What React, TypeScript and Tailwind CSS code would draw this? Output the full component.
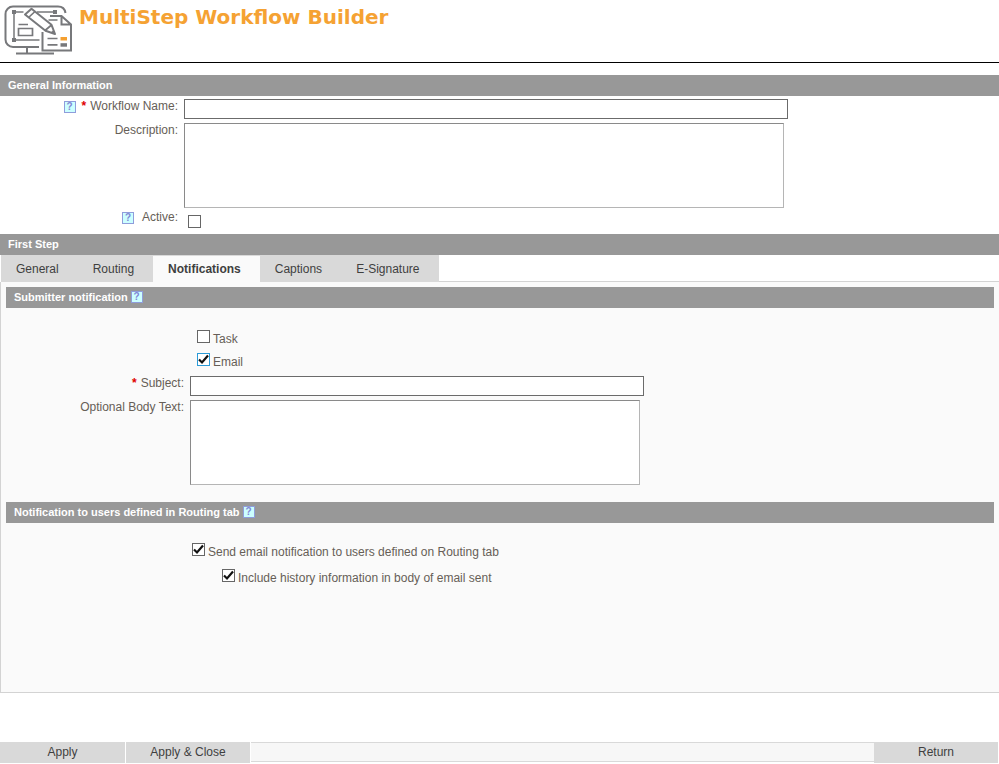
import { useState } from 'react';
import type { ReactNode } from 'react';
import clsx from 'clsx';

const TABS = ['General', 'Routing', 'Notifications', 'Captions', 'E-Signature'];

function Logo() {
  return (
    <svg width="72" height="52" viewBox="0 0 72 52" fill="none" stroke="#77787b" strokeWidth="2" aria-hidden="true">
      {/* Monitor */}
      <path d="M35 43H9a7.500 7.500 0 0 1-7.500-7.500V10a7.500 7.500 0 0 1 7.500-7.500H54q6.500 0 7.500 6.500" />
      <path d="M23 43v6M12 49.500h38" />
      {/* Drawing frame */}
      <path d="M10 9v26M12 8h7.500M33 8h17M12 36h23.500" strokeWidth="1.500" />
      <path d="M8 6h4v4h-4zM49 6h4v4h-4zM8 34h4v4h-4z" fill="#77787b" stroke="none" />
      <path d="M14.500 24.500h14v7h-14zM14.500 20.500h9.500" strokeWidth="1.700" />
      {/* Document */}
      <path d="M38.500 28V46.500h28.500V20.500L57.500 12H46M57.500 12v8.500h9.500" />
      <path d="M44.500 16h9M43.500 34.500h10M43.500 40.800h10" strokeWidth="1.700" />
      <path d="M56.500 33h6.500v3.500h-6.500z" fill="#f5a030" stroke="none" />
      <path d="M56.500 39.200h6.500v3.500h-6.500z" fill="#77787b" stroke="none" />
      {/* Pencil */}
      <path d="M21 10.500L27.500 4.800L47.500 20.800L51 30L41.500 26.800z" fill="#fff" strokeLinejoin="round" />
      <path d="M24.500 13.500l6.500-6M41 26.500l6.500-5.500" strokeWidth="1.700" />
      <path d="M47 28.300l2.500-2.300 1.500 4z" fill="#77787b" stroke="none" />
    </svg>
  );
}

function HelpButton({ topic }: { topic: string }) {
  return (
    <button
      type="button"
      aria-label={`Help: ${topic}`}
      className="flex h-3 w-3 shrink-0 items-center justify-center border border-[#8f9ddb] bg-[#ccffff] text-[10px] leading-[10px] font-bold text-[#8186d5]"
    >
      ?
    </button>
  );
}

function SectionBar({ title, help }: { title: string; help?: boolean }) {
  return (
    <div className="flex h-[21px] items-start gap-[3px] bg-[#989898] px-2">
      <h2 className="pt-0.5 text-[11px] leading-4 font-bold text-white">{title}</h2>
      {help && (
        <span className="pt-1">
          <HelpButton topic={title} />
        </span>
      )}
    </div>
  );
}

interface FieldProps {
  id: string;
  label: string;
  required?: boolean;
  help?: boolean;
  className?: string;
  children: ReactNode;
}

function Field({ id, label, required, help, className, children }: FieldProps) {
  return (
    <div className={clsx('flex items-start', className)}>
      <div className="mr-1.5 flex w-[178px] shrink-0 items-center justify-end leading-[15px]">
        {help && <HelpButton topic={label} />}
        <label htmlFor={id} className={clsx(help && (required ? 'ml-1.5' : 'ml-2'))}>
          {required && <span className="mr-1 font-bold text-[#e00000]">*</span>}
          {label}:
        </label>
      </div>
      {children}
    </div>
  );
}

interface CheckboxProps {
  id: string;
  defaultChecked?: boolean;
  active?: boolean;
}

function Checkbox({ id, defaultChecked, active }: CheckboxProps) {
  return (
    <span className="grid h-[13px] w-[13px] shrink-0">
      <input
        id={id}
        type="checkbox"
        defaultChecked={defaultChecked}
        className={clsx(
          'peer h-[13px] w-[13px] appearance-none border bg-white [grid-area:1/1]',
          active ? 'border-[#2a9bd8]' : 'border-[#666666]',
        )}
      />
      <svg
        viewBox="0 0 13 13"
        className="pointer-events-none z-10 hidden h-[13px] w-[13px] [grid-area:1/1] peer-checked:block"
        fill="none"
        stroke="#111"
        strokeWidth="2.200"
      >
        <path d="M2 6.500L5 9.500L11 2.500" />
      </svg>
    </span>
  );
}

function CheckRow({ id, label, className, ...rest }: CheckboxProps & { label: string; className?: string }) {
  return (
    <div className={clsx('flex items-start gap-[3px]', className)}>
      <Checkbox id={id} {...rest} />
      <label htmlFor={id} className="mt-px leading-4">
        {label}
      </label>
    </div>
  );
}

const inputClass = 'h-5 min-w-0 border border-[#6b6b6b] bg-white px-1 outline-none';
const areaClass =
  'block h-[85px] min-w-0 resize-none border border-t-[#8a8a8a] border-l-[#8a8a8a] border-r-[#b5b5b5] border-b-[#b5b5b5] bg-white p-1 outline-none';
const footerButtonClass = 'bg-[#d9d9d9] pb-0.5';

export default function App() {
  const [tab, setTab] = useState('Notifications');

  return (
    <div className="flex min-h-screen flex-col bg-white font-['Liberation_Sans',Arial,sans-serif] text-xs text-[#665e57]">
      <header className="flex h-[63px] items-start gap-[3px] border-b border-black pt-1 pl-1">
        <Logo />
        <h1 className="font-['DejaVu_Sans',Verdana,sans-serif] text-xl leading-[26px] font-bold text-[#f5a233]">
          MultiStep Workflow Builder
        </h1>
      </header>

      <form className="flex flex-1 flex-col pt-3" onSubmit={(e) => e.preventDefault()}>
        <SectionBar title="General Information" />
        <div className="pt-[3px] pb-1.5">
          <Field id="name" label="Workflow Name" required help>
            <input id="name" type="text" className={clsx(inputClass, 'w-[604px]')} />
          </Field>
          <Field id="description" label="Description" className="mt-1">
            <textarea id="description" className={clsx(areaClass, 'w-[600px]')} />
          </Field>
          <Field id="active" label="Active" help className="mt-0.5">
            <span className="pt-[5px] pl-1">
              <Checkbox id="active" />
            </span>
          </Field>
        </div>

        <SectionBar title="First Step" />
        <div role="tablist" className="flex h-[27px] pl-px">
          {TABS.map((name) => (
            <button
              key={name}
              type="button"
              role="tab"
              aria-selected={tab === name}
              onClick={() => setTab(name)}
              className={clsx(
                'pr-[19px] pl-[15px] text-[#3f3f3f]',
                tab === name ? 'border-t border-[#d9d9d9] bg-[#fafafa] font-bold' : 'bg-[#d9d9d9]',
              )}
            >
              {name}
            </button>
          ))}
          <div className="flex-1 border-b border-[#d3d3d3]" />
        </div>

        <div role="tabpanel" className="border-b border-l border-[#d3d3d3] bg-[#fafafa] px-[5px] pt-[5px] pb-[106px]">
          <SectionBar title="Submitter notification" help />
          <CheckRow id="task" label="Task" className="mt-[22px] pl-[191px]" />
          <CheckRow id="email" label="Email" defaultChecked active className="mt-1.5 pl-[191px]" />
          <Field id="subject" label="Subject" required className="mt-1.5">
            <input id="subject" type="text" className={clsx(inputClass, 'w-[454px]')} />
          </Field>
          <Field id="body" label="Optional Body Text" className="mt-1">
            <textarea id="body" className={clsx(areaClass, 'w-[450px]')} />
          </Field>

          <div className="mt-[17px]">
            <SectionBar title="Notification to users defined in Routing tab" help />
          </div>
          <CheckRow
            id="send"
            label="Send email notification to users defined on Routing tab"
            defaultChecked
            className="mt-5 pl-[186px]"
          />
          <CheckRow
            id="history"
            label="Include history information in body of email sent"
            defaultChecked
            className="mt-[9px] pl-[216px]"
          />
        </div>

        <footer className="mt-auto mb-px flex h-[21px] gap-px pr-px text-[#3f3f3f]">
          <button type="submit" className={clsx(footerButtonClass, 'w-[125px]')}>Apply</button>
          <button type="submit" className={clsx(footerButtonClass, 'w-[124px]')}>Apply &amp; Close</button>
          <div className="mb-px -mr-px flex-1 border-y border-[#d9d9d9] bg-[#f7f7f7]" />
          <button type="button" className={clsx(footerButtonClass, 'w-[124px]')}>Return</button>
        </footer>
      </form>
    </div>
  );
}
